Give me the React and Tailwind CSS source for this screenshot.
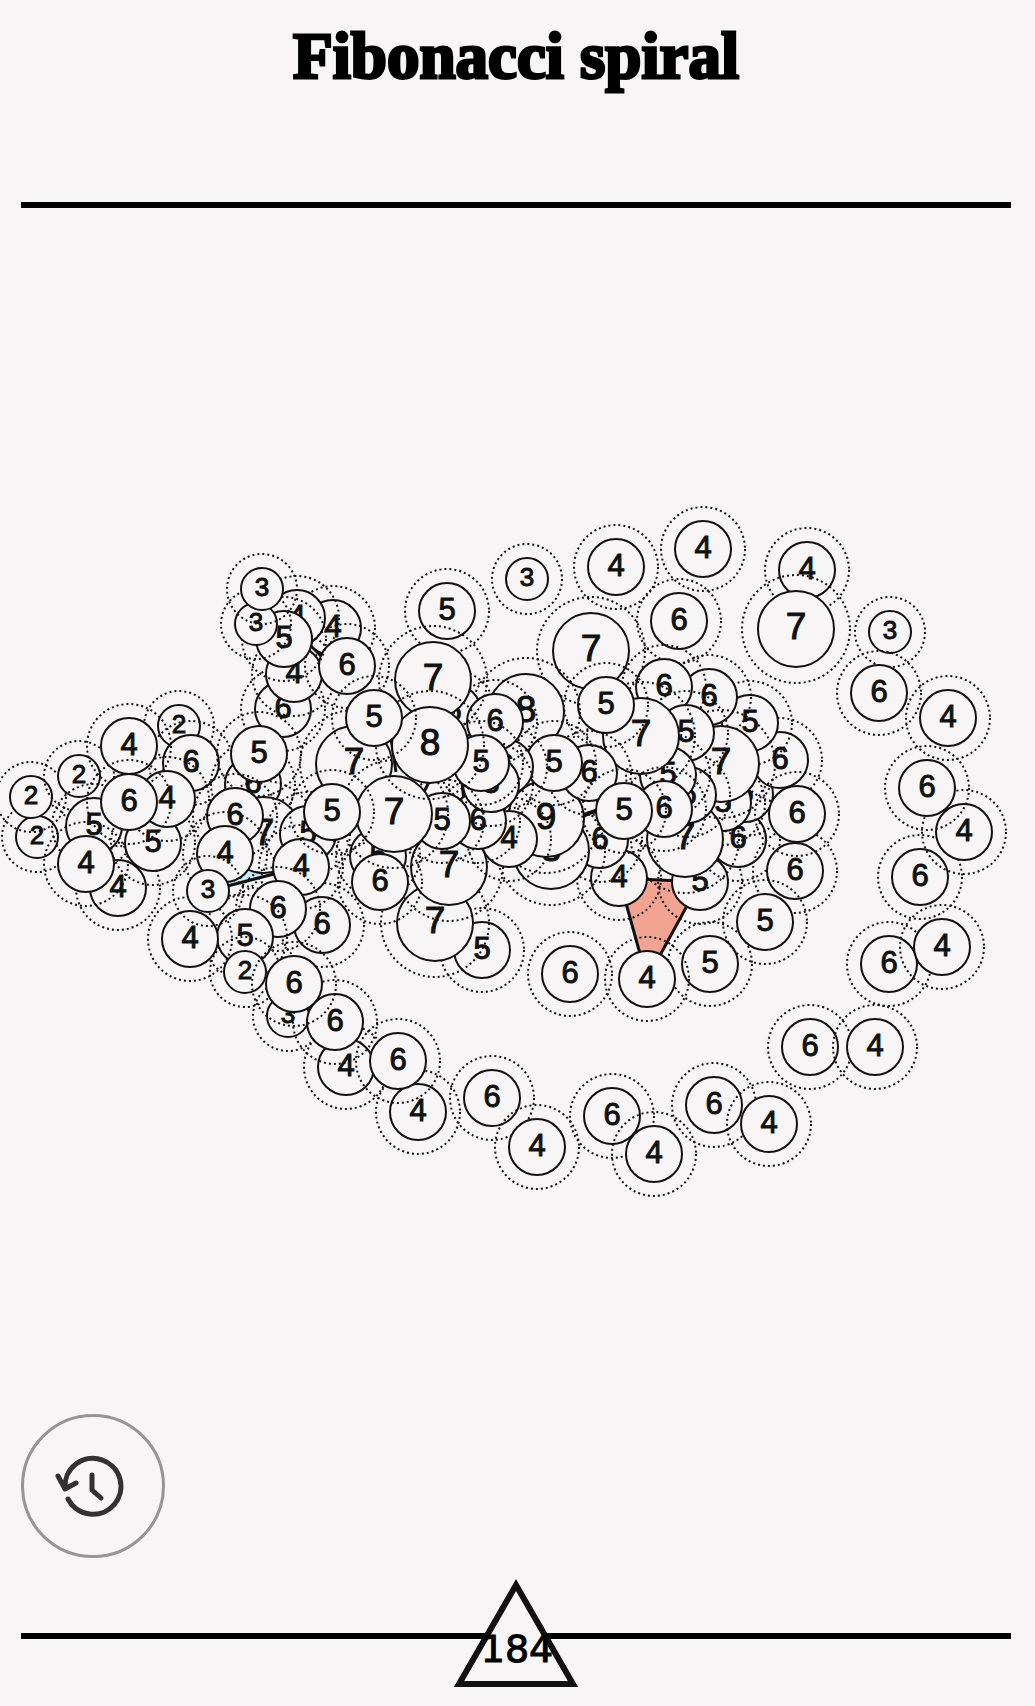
import React from "react";

// Ring nodes, back to front: [value, x, y]
const NODES = [
  [2, 37, 837], [2, 31, 797], [2, 79, 776], [2, 179, 726], [6, 191, 763],
  [4, 118, 888], [5, 94, 826], [5, 153, 843], [4, 167, 799], [4, 129, 746],
  [6, 129, 802], [4, 86, 864],

  [6, 253, 784], [7, 264, 835], [5, 308, 834], [6, 283, 709],
  [4, 333, 628], [4, 297, 618], [4, 294, 674], [6, 347, 666],
  [5, 284, 639], [3, 256, 624], [3, 262, 589], [5, 259, 754],
  [6, 235, 816], [4, 225, 854],
  [6, 322, 925], [4, 301, 867], [6, 278, 909], [5, 245, 937], [4, 190, 939],
  [3, 208, 891], [2, 245, 972],

  [3, 288, 1016], [4, 346, 1067], [6, 335, 1022], [6, 294, 984],
  [4, 418, 1112], [6, 398, 1061], [6, 492, 1098], [4, 537, 1147],
  [6, 612, 1116], [4, 654, 1154], [6, 714, 1105], [4, 769, 1124],
  [6, 810, 1047], [4, 875, 1047], [6, 889, 964], [4, 942, 947],
  [6, 920, 877], [4, 964, 832], [6, 927, 788], [4, 948, 718],
  [3, 890, 632], [6, 879, 693], [4, 807, 570], [7, 796, 629],
  [4, 703, 549], [4, 616, 567], [6, 679, 621], [3, 527, 579],

  [5, 700, 882], [6, 738, 839], [6, 745, 794], [5, 723, 803], [7, 685, 839],
  [6, 780, 760], [5, 750, 723], [6, 709, 697], [6, 664, 687], [7, 721, 764],
  [6, 688, 795], [5, 686, 733], [5, 668, 775], [7, 641, 736], [6, 664, 809],
  [6, 795, 871], [6, 797, 814], [5, 710, 964], [5, 765, 922],
  [4, 619, 878], [4, 647, 979], [6, 600, 840], [8, 551, 851],
  [9, 546, 819], [6, 589, 773], [7, 591, 651], [5, 606, 705], [5, 624, 811],
  [6, 570, 974],

  [8, 526, 712], [5, 554, 763], [6, 505, 767], [5, 453, 712], [6, 495, 722],
  [5, 482, 950], [7, 435, 923], [7, 449, 867],
  [4, 509, 839], [6, 478, 821], [5, 491, 784], [5, 481, 763], [5, 442, 821],
  [5, 378, 856], [6, 380, 882], [7, 354, 764], [7, 394, 814],
  [5, 447, 611], [7, 433, 680], [8, 430, 745], [5, 374, 718], [5, 332, 812],
];

const SMALL = { ring: 21, halo: 35, drop: 7, text: "text-[26px]" };
const MEDIUM = { ring: 28, halo: 42, drop: 9, text: "text-[31px]" };
const LARGE = { ring: 38, halo: 54, drop: 10, text: "text-[37px]" };

function sizeOf(value) {
  if (value < 4) return SMALL;
  if (value < 7) return MEDIUM;
  return LARGE;
}

function Node({ value, x, y }) {
  const size = sizeOf(value);
  return (
    <g>
      <circle cx={x} cy={y} r={size.halo} fill="none" stroke="#111111" strokeWidth="2" strokeDasharray="2 3" />
      <circle cx={x} cy={y} r={size.ring} fill="#f7f5f6" stroke="#111111" strokeWidth="2" />
      <text x={x} y={y + size.drop} textAnchor="middle" fill="#111111" stroke="#111111" strokeWidth="1" className={size.text}>
        {value}
      </text>
    </g>
  );
}

function Board() {
  return (
    <svg viewBox="0 208 1035 1192" className="block w-full font-['Liberation_Sans',sans-serif]" role="img" aria-label="Puzzle board">
      <g stroke="#111111" strokeWidth="3" strokeLinejoin="round">
        <polygon points="619,878 700,882 647,979" fill="#f2a392" />
        <polygon points="208,891 264,835 301,867" fill="#cdeaf8" />
        <path d="M297 632L333 668M391 738L396 772M424 792L430 780M462 782L464 802M453 712L470 714M582 815L600 809" fill="none" />
      </g>
      {NODES.map(([value, x, y]) => (
        <Node key={`${x}-${y}`} value={value} x={x} y={y} />
      ))}
    </svg>
  );
}

export default function App() {
  return (
    <div className="min-h-screen bg-[#f7f5f6] pb-[19px] text-black">
      <header className="mr-6 ml-[21px] flex h-[208px] justify-center border-b-[6px] border-black pt-3">
        <h1 className="font-['Liberation_Serif',serif] text-[65px] leading-[88px] font-bold whitespace-nowrap [-webkit-text-stroke:3px_black]">
          Fibonacci spiral
        </h1>
      </header>
      <main>
        <Board />
        <button
          type="button"
          aria-label="Undo history"
          className="mt-[14px] ml-[21px] flex size-36 items-center justify-center rounded-full border-[3px] border-[#969495]"
        >
          <svg viewBox="0 0 144 144" className="size-36 shrink-0" fill="none" stroke="#333132" strokeWidth="5" strokeLinecap="round" strokeLinejoin="round">
            <path d="M44 74A28 28 0 1 1 47 85" />
            <path d="M37 62L44 75L55 69" />
            <path d="M71 61V76L80 84" />
          </svg>
        </button>
      </main>
      <footer className="relative mt-[21px] mr-6 ml-[21px] flex justify-center">
        <div className="absolute inset-x-0 top-[54px] h-[6px] bg-black" />
        <svg viewBox="0 0 126 108" className="relative h-[108px] w-[126px]" role="img" aria-label="184">
          <polygon points="63,6 120,105 6,105" fill="#f7f5f6" stroke="#111111" strokeWidth="6" />
          <text x="64" y="83" textAnchor="middle" stroke="black" strokeWidth="1" className="font-['DejaVu_Sans',sans-serif] text-[38px]">
            184
          </text>
        </svg>
      </footer>
    </div>
  );
}
